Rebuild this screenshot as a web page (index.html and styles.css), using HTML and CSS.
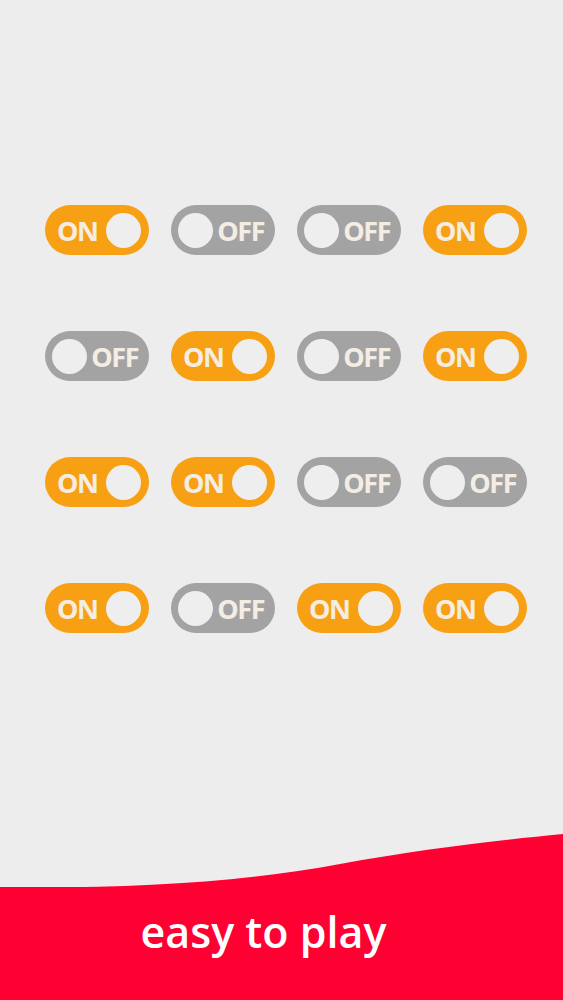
FILE: index.html
```html
<!DOCTYPE html>
<html lang="en">

<head>
  <meta charset="UTF-8">
  <meta name="viewport" content="width=device-width, initial-scale=1.0">
  <title>easy to play</title>
  <link rel="stylesheet" href="styles.css">
</head>

<body>
  <div class="board">
    <div class="switch on"><span class="label">ON</span><span class="knob"></span></div>
    <div class="switch off"><span class="knob"></span><span class="label">OFF</span></div>
    <div class="switch off"><span class="knob"></span><span class="label">OFF</span></div>
    <div class="switch on"><span class="label">ON</span><span class="knob"></span></div>

    <div class="switch off"><span class="knob"></span><span class="label">OFF</span></div>
    <div class="switch on"><span class="label">ON</span><span class="knob"></span></div>
    <div class="switch off"><span class="knob"></span><span class="label">OFF</span></div>
    <div class="switch on"><span class="label">ON</span><span class="knob"></span></div>

    <div class="switch on"><span class="label">ON</span><span class="knob"></span></div>
    <div class="switch on"><span class="label">ON</span><span class="knob"></span></div>
    <div class="switch off"><span class="knob"></span><span class="label">OFF</span></div>
    <div class="switch off"><span class="knob"></span><span class="label">OFF</span></div>

    <div class="switch on"><span class="label">ON</span><span class="knob"></span></div>
    <div class="switch off"><span class="knob"></span><span class="label">OFF</span></div>
    <div class="switch on"><span class="label">ON</span><span class="knob"></span></div>
    <div class="switch on"><span class="label">ON</span><span class="knob"></span></div>
  </div>

  <!-- 底部红色波浪 -->
  <div class="footer">
    <svg class="wave" viewBox="0 0 563 54" preserveAspectRatio="none">
      <path d="M0 53 C120 55 240 49 340 30 C420 15 500 6 563 0 L563 54 L0 54 Z" fill="#ff0032" />
    </svg>
    <div class="banner">easy to play</div>
  </div>
</body>

</html>
```

FILE: styles.css
```css
body {
  display: flex;
  flex-direction: column;
  min-height: 1000px;
  margin: 0;
  background: #ededed;
  font-family: "Open Sans", "Liberation Sans", sans-serif;
}

.board {
  display: grid;
  grid-template-columns: repeat(4, 104px);
  column-gap: 22px;
  row-gap: 76px;
  padding: 205px 0 0 45px;
}

.switch {
  display: flex;
  align-items: center;
  justify-content: space-between;
  height: 50px;
  border-radius: 25px;
  padding: 0 8px 0 7px;
  box-sizing: border-box;
}

.switch.on {
  background: #f8a013;
  padding-left: 12px;
}

.switch.off {
  background: #a3a3a3;
  padding-right: 11px;
}

.knob {
  width: 35px;
  height: 35px;
  border-radius: 50%;
  background: #eeeeee;
}

.label {
  color: #f4ede4;
  font-size: 27px;
  font-weight: 700;
  letter-spacing: -1.5px;
  line-height: 1;
}

.footer {
  margin-top: auto;
  display: flex;
  flex-direction: column;
}

.wave {
  display: block;
  width: 100%;
  height: 54px;
}

.banner {
  height: 113px;
  margin-top: -1px;
  padding-right: 36px;
  background: #ff0032;
  color: #ffffff;
  font-size: 43px;
  font-weight: 600;
  text-align: center;
  line-height: 90px;
}
```
